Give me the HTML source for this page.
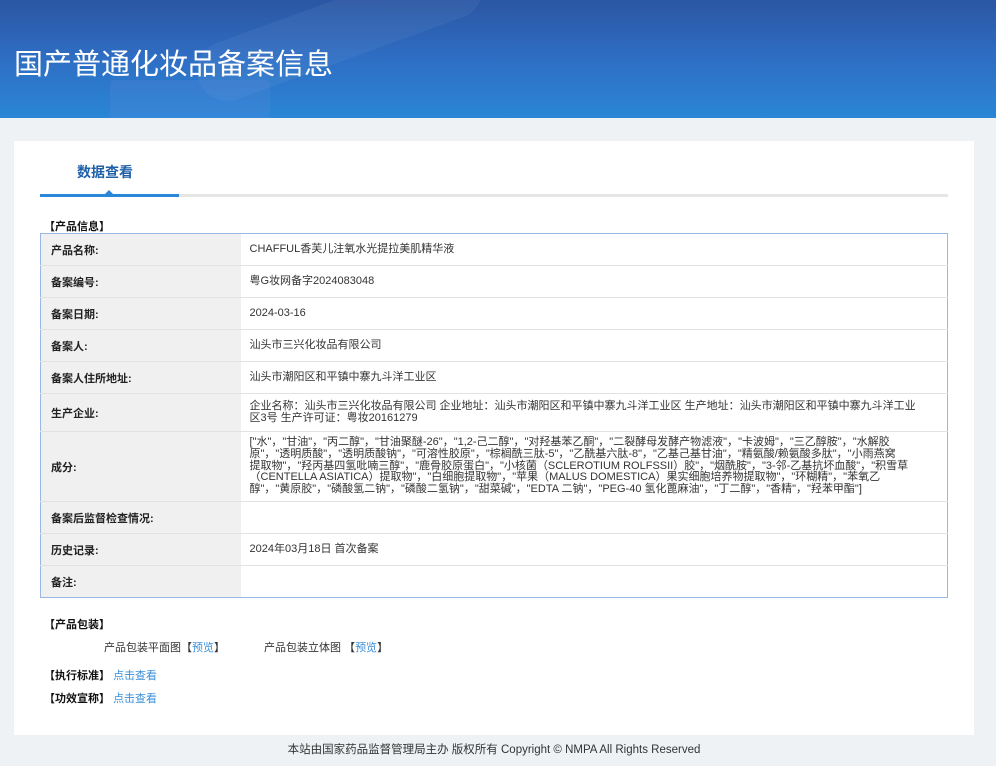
<!DOCTYPE html>
<html><head><meta charset="utf-8"><style>
*{margin:0;padding:0;box-sizing:border-box}
body{width:996px;height:766px;background:#eef2f5;font-family:"Liberation Sans","Noto Sans CJK SC",sans-serif;color:#333;position:relative;overflow:hidden}
.hdr{position:absolute;left:0;top:0;width:996px;height:118px;background:linear-gradient(180deg,#2b56a3 0%,#2e6ec4 50%,#2a86d6 100%);overflow:hidden}
.hdr h1{position:absolute;left:14px;top:41px;color:#fff;font-size:29px;font-weight:normal;font-family:"Noto Sans CJK SC",sans-serif}
.blob{position:absolute;border-radius:40px;background:rgba(255,255,255,.05);transform:rotate(-20deg)}
.card{position:absolute;left:14px;top:141px;width:960px;height:594px;background:#fff}
.tab{position:absolute;left:77px;top:162px;font-size:14px;color:#1e5fa8;font-weight:bold}
.tl{position:absolute;left:40px;top:194px;width:908px;height:3px;background:#e6e6e6}
.tl2{position:absolute;left:40px;top:194px;width:139px;height:3px;background:#2a86d6}
.tri{position:absolute;left:105px;top:190px;width:0;height:0;border-left:4px solid transparent;border-right:4px solid transparent;border-bottom:4px solid #2a86d6}
.sec{position:absolute;font-size:11px;font-weight:bold;color:#111}
table{position:absolute;left:40px;top:233px;width:908px;border-collapse:collapse;border:1px solid #9bb7e3;font-size:11px}
td{border-bottom:1px solid #e2e2e2;height:32px;vertical-align:middle}
td.l{width:200px;background:#f0f0f0;font-weight:bold;padding-left:10px;color:#222}
td.v{padding-left:9px;color:#333;line-height:11.7px;white-space:nowrap}
.a{color:#3a8fd9}
.f{position:absolute;left:0;width:988px;top:741px;text-align:center;font-size:11.5px;color:#333}
</style></head><body>
<div class="hdr">
<div class="blob" style="left:190px;top:0px;width:300px;height:60px"></div>
<div class="blob" style="left:110px;top:80px;width:160px;height:60px;border-radius:4px;transform:none;background:rgba(100,140,220,.2)"></div>
<h1>国产普通化妆品备案信息</h1>
</div>
<div class="card"></div>
<div class="tab">数据查看</div>
<div class="tl"></div><div class="tl2"></div><div class="tri"></div>
<div class="sec" style="left:44px;top:218px">【产品信息】</div>
<table>
<tr><td class="l">产品名称:</td><td class="v">CHAFFUL香芙儿注氧水光提拉美肌精华液</td></tr>
<tr><td class="l">备案编号:</td><td class="v">粤G妆网备字2024083048</td></tr>
<tr><td class="l">备案日期:</td><td class="v">2024-03-16</td></tr>
<tr><td class="l">备案人:</td><td class="v">汕头市三兴化妆品有限公司</td></tr>
<tr><td class="l">备案人住所地址:</td><td class="v">汕头市潮阳区和平镇中寨九斗洋工业区</td></tr>
<tr><td class="l" style="height:38px">生产企业:</td><td class="v">企业名称：汕头市三兴化妆品有限公司 企业地址：汕头市潮阳区和平镇中寨九斗洋工业区 生产地址：汕头市潮阳区和平镇中寨九斗洋工业<br>区3号 生产许可证：粤妆20161279</td></tr>
<tr><td class="l" style="height:70px">成分:</td><td class="v">["水"，"甘油"，"丙二醇"，"甘油聚醚-26"，"1,2-己二醇"，"对羟基苯乙酮"，"二裂酵母发酵产物滤液"，"卡波姆"，"三乙醇胺"，"水解胶<br>原"，"透明质酸"，"透明质酸钠"，"可溶性胶原"，"棕榈酰三肽-5"，"乙酰基六肽-8"，"乙基己基甘油"，"精氨酸/赖氨酸多肽"，"小雨燕窝<br>提取物"，"羟丙基四氢吡喃三醇"，"鹿骨胶原蛋白"，"小核菌（SCLEROTIUM ROLFSSII）胶"，"烟酰胺"，"3-邻-乙基抗坏血酸"，"积雪草<br>（CENTELLA ASIATICA）提取物"，"白细胞提取物"，"苹果（MALUS DOMESTICA）果实细胞培养物提取物"，"环糊精"，"苯氧乙<br>醇"，"黄原胶"，"磷酸氢二钠"，"磷酸二氢钠"，"甜菜碱"，"EDTA 二钠"，"PEG-40 氢化蓖麻油"，"丁二醇"，"香精"，"羟苯甲酯"]</td></tr>
<tr><td class="l">备案后监督检查情况:</td><td class="v"></td></tr>
<tr><td class="l">历史记录:</td><td class="v">2024年03月18日 首次备案</td></tr>
<tr><td class="l" style="border-bottom:none">备注:</td><td class="v" style="border-bottom:none"></td></tr>
</table>
<div class="sec" style="left:44px;top:616px">【产品包装】</div>
<div style="position:absolute;left:104px;top:639px;font-size:11px">产品包装平面图【<span class="a">预览</span>】</div>
<div style="position:absolute;left:264px;top:639px;font-size:11px">产品包装立体图 【<span class="a">预览</span>】</div>
<div class="sec" style="left:44px;top:667px">【执行标准】 <span class="a" style="font-weight:normal">点击查看</span></div>
<div class="sec" style="left:44px;top:690px">【功效宣称】 <span class="a" style="font-weight:normal">点击查看</span></div>
<div class="f">本站由国家药品监督管理局主办 版权所有 Copyright © NMPA All Rights Reserved</div>
</body></html>
